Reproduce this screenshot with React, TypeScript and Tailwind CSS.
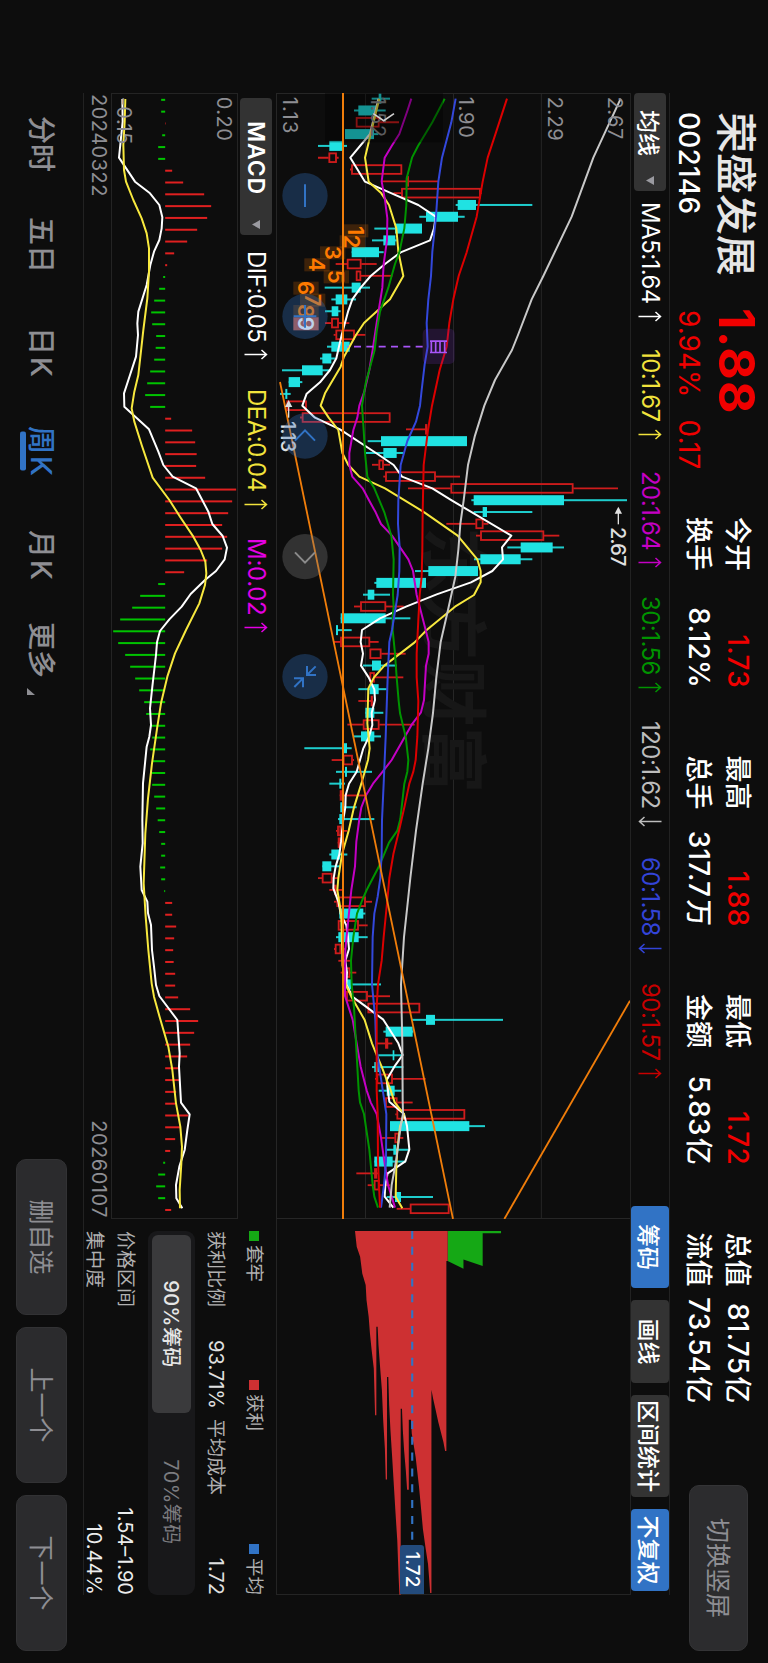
import React from 'react';
import clsx from 'clsx';

type Point = [number, number];
// [direction, body low, body high, wick low, wick high]
type Candle = ['u' | 'd', number, number, number, number];

const STEP = 35.43;

const stats = [
  { rows: [['今开', '1.73', '', true], ['换手', '8.12%', '', false]] },
  { rows: [['最高', '1.88', '', true], ['总手', '317.7', '万', false]] },
  { rows: [['最低', '1.72', '', true], ['金额', '5.83', '亿', false]] },
  { rows: [['总值', '81.75', '亿', false], ['流值', '73.54', '亿', false]] },
] as { rows: [string, string, string, boolean][] }[];

const averages = [
  { label: 'MA5:1.64', up: true, cls: 'w-[147px] text-white' },
  { label: '10:1.67', up: true, cls: 'w-[122px] text-[#f2e33c]' },
  { label: '20:1.64', up: true, cls: 'w-[125px] text-[#c400c4]' },
  { label: '30:1.56', up: true, cls: 'w-[125px] text-[#009400]' },
  { label: '120:1.62', up: false, cls: 'w-[136px] text-[#bdbdbd]' },
  { label: '60:1.58', up: false, cls: 'w-[126px] text-[#3344d8]' },
  { label: '90:1.57', up: true, cls: 'w-[110px] text-[#c80000]' },
];

const tools = [
  { label: '筹码', cls: 'w-[82px] bg-[#3173c5]' },
  { label: '画线', cls: 'w-[83px] bg-[#333333]' },
  { label: '区间统计', cls: 'w-[102px] bg-[#333333]' },
  { label: '不复权', cls: 'w-[82px] bg-[#3173c5]' },
];

const tabs = [
  { label: '分时', cls: 'w-[101px]' },
  { label: '五日', cls: 'w-[110px]' },
  { label: '日', k: true, cls: 'w-[99px]' },
  { label: '周', k: true, cls: 'w-[104px]', active: true },
  { label: '月', k: true, cls: 'w-[92px]' },
  { label: '更多', cls: 'w-[80px]', more: true },
];

const candles: Candle[] = [
  ['d', 326, 334, 305, 360], ['d', 265, 318, 252, 347], ['u', 258, 328, 258, 387], ['d', 225, 312, 225, 325],
  ['d', 178, 218, 144, 231], ['u', 176, 200, 144, 206], ['u', 244, 396, 240, 396], ['u', 413, 416, 333, 505],
  ['u', 394, 632, 370, 635], ['d', 563, 618, 557, 787], ['d', 468, 564, 448, 584], ['d', 375, 456, 313, 456],
  ['d', 340, 376, 306, 380], ['d', 245, 327, 245, 341], ['u', 231, 274, 197, 320], ['u', 258, 273, 258, 367],
  ['d', 245, 272, 164, 300], ['d', 197, 232, 184, 258], ['d', 185, 205, 165, 212], ['u', 184, 206, 165, 238],
  ['u', 197, 254, 191, 286], ['d', 184, 239, 171, 239], ['d', 157, 184, 150, 197], ['d', 96, 158, 36, 180],
  ['d', 56, 90, 56, 97], ['d', 46, 52, 30, 62], ['u', 50, 110, 50, 110], ['u', 96, 361, 90, 361],
  ['u', 469, 471, 408, 472], ['d', 333, 591, 293, 591], ['d', 340, 380, 287, 400], ['u', 326, 341, 306, 360],
  ['u', 346, 497, 340, 570], ['u', 542, 910, 414, 1044], ['d', 611, 882, 604, 1071], ['d', 638, 651, 611, 787],
  ['u', 617, 640, 529, 655], ['u', 631, 822, 618, 868], ['d', 752, 848, 712, 882], ['d', 631, 752, 612, 787],
  ['d', 475, 624, 435, 624], ['d', 319, 468, 313, 468], ['d', 293, 313, 279, 360], ['u', 271, 348, 252, 401],
  ['d', 212, 347, 212, 421], ['d', 198, 204, 198, 245], ['u', 211, 300, 192, 326], ['u', 299, 334, 299, 407],
  ['d', 306, 333, 279, 380], ['u', 299, 314, 299, 400], ['d', 299, 326, 265, 350], ['u', 306, 308, 265, 309],
  ['d', 286, 313, 286, 340], ['u', 279, 328, 232, 434], ['d', 273, 313, 252, 333], ['d', 219, 231, 103, 245],
  ['u', 219, 248, 185, 252], ['d', 225, 231, 198, 306], ['d', 208, 214, 178, 225], ['u', 210, 219, 209, 290],
  ['d', 212, 216, 212, 260], ['d', 208, 217, 204, 313], ['u', 202, 213, 198, 232], ['u', 204, 212, 203, 213],
  ['d', 184, 210, 178, 232], ['d', 157, 184, 157, 210], ['u', 156, 187, 144, 204], ['u', 193, 199, 178, 218],
  ['u', 200, 287, 192, 306], ['d', 208, 280, 208, 286], ['u', 204, 266, 204, 293], ['d', 205, 266, 198, 293],
  ['u', 195, 213, 192, 225], ['u', 215, 222, 205, 240], ['u', 222, 240, 212, 259], ['d', 230, 243, 225, 333],
  ['u', 229, 293, 229, 360], ['u', 293, 450, 290, 450], ['d', 468, 495, 425, 699], ['d', 347, 428, 340, 430],
  ['u', 346, 354, 320, 367], ['d', 368, 373, 325, 398], ['d', 313, 330, 306, 400], ['u', 320, 368, 315, 467],
  ['d', 350, 374, 326, 394], ['u', 346, 382, 346, 428], ['u', 380, 585, 376, 585], ['d', 360, 598, 360, 645],
  ['u', 374, 387, 333, 400], ['d', 370, 378, 350, 420], ['d', 313, 368, 313, 408], ['u', 313, 321, 259, 326],
  ['u', 312, 328, 293, 360], ['d', 375, 393, 350, 489], ['u', 420, 538, 380, 538],
];

const ma5: Point[] = [
  [41, 325], [147, 300], [218, 241], [290, 285], [325, 365], [360, 445], [395, 497], [430, 492], [466, 480],
  [502, 392], [537, 345], [573, 302], [608, 272], [643, 247], [680, 234], [750, 215], [820, 199], [855, 180],
  [892, 150], [926, 110], [962, 97], [998, 135], [1033, 210], [1104, 318], [1140, 371], [1175, 396], [1210, 487],
  [1246, 545], [1352, 724], [1387, 696], [1423, 699], [1458, 667], [1492, 603], [1528, 500], [1565, 408],
  [1600, 330], [1635, 276], [1671, 272], [1706, 279], [1742, 273], [1777, 296], [1813, 313], [1845, 315],
  [1884, 305], [1920, 307], [1955, 297], [1990, 280], [2060, 260], [2096, 237], [2131, 227], [2167, 226],
  [2202, 220], [2270, 213], [2308, 208], [2344, 197], [2379, 191], [2410, 190], [2450, 205], [2486, 212],
  [2521, 229], [2556, 234], [2592, 237], [2627, 226], [2662, 231], [2698, 229], [2735, 247], [2768, 292],
  [2804, 340], [2839, 362], [2875, 385], [2910, 398], [2945, 373], [2985, 350], [3050, 358], [3087, 402],
  [3123, 411], [3193, 418], [3229, 406], [3265, 353], [3300, 346], [3335, 344], [3368, 370],
];

const ma10: Point[] = [
  [41, 328], [147, 302], [218, 285], [290, 296], [325, 334], [360, 357], [430, 379], [500, 385], [573, 400],
  [643, 360], [714, 282], [750, 258], [815, 222], [845, 212], [925, 165], [962, 152], [998, 176], [1035, 205],
  [1104, 217], [1140, 235], [1175, 268], [1210, 345], [1282, 463], [1352, 563], [1423, 622], [1458, 632],
  [1492, 632], [1530, 612], [1565, 555], [1635, 470], [1673, 433], [1742, 343], [1777, 312], [1810, 295],
  [1915, 292], [1990, 299], [2025, 294], [2096, 274], [2167, 252], [2237, 236], [2308, 216], [2379, 205],
  [2415, 202], [2470, 211], [2503, 214], [2645, 218], [2700, 228], [2735, 244], [2805, 284], [2875, 306],
  [2910, 320], [2945, 335], [3016, 362], [3052, 374], [3087, 402], [3125, 390], [3195, 382], [3245, 379],
  [3335, 377], [3370, 397],
];

const ma20: Point[] = [
  [41, 424], [75, 413], [147, 388], [183, 365], [218, 344], [289, 335], [345, 345], [400, 352], [465, 351],
  [537, 341], [608, 337], [714, 320], [795, 308], [855, 298], [920, 283], [962, 268], [998, 262], [1035, 250],
  [1104, 238], [1140, 238], [1175, 247], [1210, 278], [1246, 297], [1282, 317], [1317, 333], [1352, 366],
  [1423, 415], [1458, 429], [1530, 440], [1635, 467], [1671, 476], [1706, 476], [1742, 468], [1845, 462],
  [1882, 453], [1919, 425], [2025, 365], [2060, 338], [2096, 309], [2131, 288], [2167, 274], [2202, 268],
  [2270, 259], [2344, 255], [2415, 244], [2503, 235], [2595, 226], [2733, 225], [2804, 248], [2875, 260],
  [2945, 272], [3016, 290], [3052, 302], [3087, 320], [3158, 333], [3229, 343], [3300, 354], [3368, 375],
];

const ma30: Point[] = [
  [41, 524], [112, 487], [183, 444], [218, 426], [280, 410], [360, 409], [430, 403], [502, 388], [537, 375],
  [608, 355], [680, 330], [740, 320], [795, 314], [895, 287], [962, 276], [1035, 281], [1104, 285], [1175, 292],
  [1210, 313], [1282, 343], [1352, 364], [1423, 371], [1530, 369], [1565, 371], [1595, 368], [1635, 368],
  [1706, 375], [1777, 380], [1848, 386], [1884, 390], [1955, 407], [2025, 415], [2060, 412], [2096, 403],
  [2202, 391], [2237, 382], [2273, 357], [2344, 327], [2415, 290], [2445, 277], [2486, 261], [2556, 250],
  [2627, 243], [2698, 245], [2768, 252], [2910, 260], [3016, 266], [3052, 270], [3087, 282], [3194, 298],
  [3300, 308], [3335, 313], [3368, 324],
];

const ma60: Point[] = [
  [41, 557], [112, 544], [218, 516], [290, 505], [395, 498], [500, 487], [573, 483], [643, 475], [714, 470],
  [785, 473], [838, 464], [915, 455], [962, 450], [1010, 438], [1068, 412], [1104, 402], [1140, 392],
  [1246, 385], [1317, 384], [1387, 389], [1458, 388], [1530, 383], [1635, 366], [1671, 358], [1777, 353],
  [1955, 347], [2096, 341], [2205, 336], [2305, 335], [2379, 331], [2435, 323], [2486, 313], [2556, 308],
  [2698, 306], [2804, 316], [2875, 318], [2910, 322], [2981, 333], [3087, 349], [3229, 348], [3300, 342],
  [3368, 333],
];

const ma90: Point[] = [
  [41, 711], [145, 677], [218, 653], [290, 638], [395, 620], [502, 590], [573, 566], [643, 550], [714, 538],
  [785, 530], [855, 509], [962, 486], [1035, 474], [1068, 470], [1140, 461], [1282, 458], [1395, 457],
  [1475, 455], [1530, 449], [1605, 445], [1706, 440], [1777, 440], [1848, 445], [1955, 442], [2025, 437],
  [2060, 430], [2096, 418], [2167, 403], [2237, 387], [2308, 370], [2379, 358], [2445, 352], [2556, 341],
  [2627, 335], [2698, 324], [2765, 320], [3016, 320], [3087, 323], [3229, 324], [3368, 330],
];

const ma120: Point[] = [
  [41, 1052], [218, 970], [395, 905], [573, 820], [643, 785], [750, 744], [795, 726], [885, 675], [962, 643],
  [1055, 614], [1140, 594], [1246, 581], [1317, 571], [1395, 565], [1475, 556], [1575, 534], [1671, 512],
  [1777, 499], [1884, 489], [1990, 475], [2096, 458], [2237, 438], [2379, 421], [2445, 414], [2556, 402],
  [2698, 393], [2875, 397], [3045, 398], [3087, 399], [3123, 392], [3229, 378], [3300, 365], [3368, 359],
];

const macdBars = [
  -4, -4, 0.5, -3, -7, -7, 7, 18, 39, 46, 42, 32, 22, 9, 2, -2, -6, -11, -14, -13, -9, -9.5, -11, -15, -18, -20,
  -15, 6, 27, 30, 31.5, 31, 40, 71, 67, 63, 57, 62, 57, 42, 19, -7, -25, -33, -45, -52, -47, -40, -35, -30, -26,
  -21, -19, -14, -13, -15, -13, -13.5, -13, -11, -9, -7.5, -6, -4, -4, -5, -4, -1, 7, 7, 11, 9, 8, 8.5, 10, 10, 13,
  25, 33, 29, 25, 22, 14, 14, 11, 10, 23, 15, 10, 5, -2, -7, -9, -7, 6,
];

const dif: Point[] = [
  [42, 127], [110, 128], [218, 117], [290, 165], [325, 210], [360, 238], [397, 247], [430, 245], [465, 238],
  [500, 222], [540, 211], [600, 200], [680, 175], [715, 172], [750, 174], [815, 168], [870, 150], [925, 132],
  [965, 133], [1033, 207], [1100, 235], [1140, 250], [1175, 278], [1210, 348], [1280, 385], [1317, 397],
  [1353, 428], [1388, 441], [1423, 434], [1458, 408], [1485, 375], [1527, 332], [1565, 305], [1603, 268],
  [1638, 240], [1672, 231], [1710, 228], [1805, 217], [1870, 210], [1920, 213], [1955, 208], [1985, 200],
  [2095, 189], [2205, 187], [2275, 188], [2345, 181], [2415, 185], [2450, 202], [2485, 204], [2520, 213],
  [2595, 216], [2645, 222], [2700, 228], [2733, 238], [2805, 292], [2905, 299], [2945, 297], [3053, 303],
  [3088, 329], [3135, 322], [3195, 314], [3245, 298], [3300, 288], [3340, 289], [3370, 307],
];

const dea: Point[] = [
  [42, 136], [110, 134], [180, 130], [255, 132], [290, 138], [345, 160], [400, 185], [445, 200], [490, 207],
  [560, 207], [640, 202], [735, 190], [870, 175], [920, 163], [970, 155], [1010, 163], [1080, 185], [1178, 218],
  [1245, 268], [1295, 300], [1355, 340], [1395, 362], [1430, 376], [1465, 379], [1500, 375], [1555, 358],
  [1635, 318], [1705, 285], [1775, 262], [1855, 243], [1925, 232], [2035, 216], [2140, 204], [2245, 196],
  [2395, 191], [2495, 197], [2595, 205], [2695, 215], [2735, 222], [2800, 240], [2885, 265], [2955, 277],
  [3055, 288], [3125, 301], [3185, 306], [3235, 304], [3315, 299], [3370, 300],
];

// sequence markers drawn under the candles: [digit, x, level]
const sequence: [number, number, number][] = [
  [1, 437, 257], [2, 470, 247], [3, 503, 188], [4, 539, 141], [5, 575, 199],
  [6, 609, 108], [7, 645, 128], [8, 679, 108], [9, 716, 108],
];

const chips: Point[] = [
  [243, 831], [290, 835], [320, 843], [370, 848], [405, 856], [450, 858], [500, 863], [550, 866], [600, 870],
  [655, 875], [795, 878], [795, 881], [530, 881], [530, 884], [585, 886], [655, 890], [720, 894], [810, 897],
  [895, 901], [987, 903], [987, 906], [680, 906], [680, 909], [765, 911], [840, 914], [920, 918], [1005, 922],
  [1090, 926], [1170, 930], [1275, 933], [1332, 935], [1332, 938], [775, 938], [775, 941], [840, 943], [900, 946],
  [960, 950], [1018, 953], [1018, 957], [808, 957], [808, 962], [850, 964], [880, 968], [920, 973], [965, 977],
  [1010, 981], [1065, 985], [1135, 990], [1190, 996], [1240, 1002], [1290, 1005], [1327, 1007], [1327, 1010],
  [718, 1010], [745, 1014], [780, 1020], [815, 1026], [845, 1032], [875, 1038], [902, 1042], [902, 1045],
  [333, 1045], [333, 1048], [243, 1048],
];

const trapped: Point[] = [
  [243, 1048], [333, 1048], [356, 1085], [328, 1085], [348, 1130], [250, 1130], [250, 1173], [243, 1173],
];

const toPoints = (pts: Point[], top: number) => pts.map(([x, v]) => `${x},${top - v}`).join(' ');

function Arrow({ up }: { up: boolean }) {
  return (
    <svg width="11" height="24" viewBox="0 0 11 24" fill="none" stroke="currentColor" strokeWidth="1.5" className={clsx('ml-[7px] shrink-0', !up && 'rotate-180')}>
      <path d="M5.5 23.5V1.5M1 6.5L5.5 1.5L10 6.5" />
    </svg>
  );
}

function Caret() {
  return (
    <svg width="9" height="8" viewBox="0 0 9 8" className="fill-[#9a9aa0]">
      <path d="M0 0H9L4.5 8Z" />
    </svg>
  );
}

function Header() {
  return (
    <div className="flex h-[98px]">
      <div className="w-[197px] shrink-0 pl-[19px]">
        <div className="flex h-[62px] items-center pt-[3px] text-[41px] font-medium text-[#e6e6e6]">荣盛发展</div>
        <div className="flex h-[34px] items-center text-[28px] font-medium tracking-[0.2px] text-white">002146</div>
      </div>
      <div className="w-[227px] shrink-0 pl-[18px] text-[#f00000]">
        <div className="flex h-[62px] items-center text-[50px] font-bold tracking-[1.2px]">1.88</div>
        <div className="flex h-[34px] items-center gap-[22px] pl-[2px] text-[28px]">
          <span>9.94%</span>
          <span>0.17</span>
        </div>
      </div>
      {stats.map((s, i) => (
        <div key={i} className="mr-[67.5px] w-[171px] shrink-0 pt-[10px]">
          {s.rows.map(([label, value, unit, red]) => (
            <div key={label} className="flex h-[39px] items-center justify-between font-medium text-white">
              <span className="pt-[4px] text-[27px]">{label}</span>
              <span className={clsx('flex items-center text-[28px] tracking-[0.2px]', red && 'text-[#f00000]')}>
                {value}
                {unit && <span className="pt-[4px] pl-[2px] text-[27px]">{unit}</span>}
              </span>
            </div>
          ))}
        </div>
      ))}
      <button className="mt-[20px] ml-[14px] h-[59px] w-[166px] shrink-0 rounded-[10px] border border-[#343436] bg-[#2c2c2e] pt-[2px] text-[25px] text-[#8e8e93]">
        切换竖屏
      </button>
    </div>
  );
}

function Toolbar() {
  return (
    <div className="flex h-[40px] w-[1502px] items-center border-y border-[#222222]">
      <button className="mr-[11px] flex h-[32px] w-[98px] shrink-0 items-center rounded-[4px] bg-[#333333] pl-[17px] text-[23px] font-medium text-white">
        <span className="mr-[20px] pt-[4px]">均线</span>
        <Caret />
      </button>
      {averages.map(a => (
        <div key={a.label} className={clsx('flex shrink-0 items-center text-[24px] tracking-[-0.55px]', a.cls)}>
          {a.label}
          <Arrow up={a.up} />
        </div>
      ))}
      <div className="mr-[4px] ml-auto flex gap-[12px]">
        {tools.map(t => (
          <button key={t.label} className={clsx('h-[38px] rounded-[4px] pt-[4px] text-[23px] font-medium text-white', t.cls)}>
            {t.label}
          </button>
        ))}
      </div>
    </div>
  );
}

function RoundButton({ x, muted, children }: { x: number; muted?: boolean; children: React.ReactNode }) {
  return (
    <g transform={`translate(${x} 975)`} fill="none" stroke={muted ? '#8b8b8b' : '#3173c5'} strokeWidth="6">
      <circle r="68" stroke="none" fill={muted ? '#777777' : '#3173c5'} fillOpacity={muted ? 0.35 : 0.32} />
      {children}
    </g>
  );
}

function PriceChart() {
  const y = (v: number) => 1080 - v;
  const line = (pts: Point[], color: string, w = 6) => (
    <polyline points={toPoints(pts, 1080)} fill="none" stroke={color} strokeWidth={w} strokeLinejoin="round" />
  );

  return (
    <svg width="1126" height="354" viewBox="24 0 3378 1062" className="shrink-0">
      {/* rejilla */}
      <g stroke="#262626" strokeWidth="3">
        {[19.5, 286.5, 550.5, 814].map(v => (
          <line key={v} x1="24" x2="3402" y1={y(v)} y2={y(v)} />
        ))}
        <line x1="25.5" x2="25.5" y1="0" y2="1062" />
        <line x1="3400.5" x2="3400.5" y1="0" y2="1062" />
      </g>
      <text x="1325" y={y(478)} fontSize="200" fontWeight="700" fill="#171717">东方财富</text>

      {/* velas */}
      {candles.map(([dir, lo, hi, wl, wh], i) => {
        const x = 41 + STEP * i;
        if (dir === 'd') {
          return (
            <g key={i} fill="#20e2e2">
              <rect x={x - 3} y={y(wh)} width="6" height={wh - wl} opacity="0.9" />
              <rect x={x - 15} y={y(hi)} width="30" height={Math.max(hi - lo, 5)} />
            </g>
          );
        }
        return (
          <g key={i} stroke="#cf1c1c" strokeWidth="5.5" fill="none">
            <line x1={x} x2={x} y1={y(wh)} y2={y(hi)} />
            <line x1={x} x2={x} y1={y(lo)} y2={y(wl)} />
            <rect x={x - 13} y={y(hi) + 2} width="26" height={Math.max(hi - lo - 4, 1)} />
          </g>
        );
      })}

      {line(ma5, '#ffffff')}
      {line(ma10, '#f7e83e')}
      {line(ma20, '#c400c4')}
      {line(ma30, '#009400')}
      {line(ma60, '#3348dc')}
      {line(ma90, '#dc0000')}
      {line(ma120, '#c8c8c8')}

      <g fontSize="60" fill="#8e8e93">
        <text x="35" y={y(1015)} letterSpacing="1.5">2.67</text>
        <text x="35" y={y(833)} letterSpacing="1.5">2.29</text>
        <text x="35" y={y(567)} letterSpacing="2.5">1.90</text>
        <text x="35" y={y(303)} letterSpacing="2.5">1.52</text>
        <text x="35" y={y(39)} letterSpacing="4">1.13</text>
      </g>

      <rect x="24" y={y(519)} width="148" height="354" fill="#000000" fillOpacity="0.35" />
      <path d={`M86 ${y(310)}L107 ${y(341)}L86 ${y(372)}`} fill="none" stroke="#d0d0d0" strokeWidth="5" />

      {sequence.map(([n, x, v]) => (
        <g key={n}>
          <rect x={x - 19} y={y(v + 38)} width="39" height="76" fill={n === 9 ? '#d8604c' : '#ff7a00'} fillOpacity={n === 9 ? 0.85 : 0.2} />
          <text x={x} y={y(v) + 24} fontSize="66" fontWeight="600" textAnchor="middle" fill={n === 9 ? '#ffffff' : '#ff7a00'}>{n}</text>
        </g>
      ))}

      {/* nota */}
      <rect x="731" y={y(554)} width="106" height="96" rx="15" fill="#7a30c0" fillOpacity="0.2" />
      <g stroke="#a855f7" strokeWidth="5">
        <line x1="785" x2="785" y1={y(458)} y2={y(232)} strokeDasharray="21 16" />
        <path d={`M768.5 ${y(531)}V${y(480)}M802.5 ${y(531)}V${y(480)}`} />
        <path d={`M768 ${y(484)}H803M768 ${y(497)}H803M768 ${y(510)}H803M768 ${y(524)}H803`} />
      </g>

      <g stroke="#f07d0a" strokeWidth="5.5">
        <line x1="24" x2="3402" y1={y(219)} y2={y(219)} strokeWidth="6" />
        <line x1="891" x2="3402" y1={y(30)} y2={y(549)} />
        <line x1="2747" x2="3402" y1={y(1080)} y2={y(703)} />
      </g>

      <g fill="#e0e0e0" fontSize="60" fontWeight="500">
        <path d={`M945 ${y(56)}L966 ${y(67)}V${y(45)}Z`} />
        <rect x="962" y={y(58)} width="36" height="4" />
        <text x="1008" y={y(34)} textLength="94">1.13</text>
        <path d={`M1265 ${y(1045)}L1286 ${y(1056)}V${y(1034)}Z`} />
        <rect x="1282" y={y(1047)} width="36" height="4" />
        <text x="1326" y={y(1023)} textLength="118">2.67</text>
      </g>

      <RoundButton x={332}>
        <path d="M-34 0H34" />
      </RoundButton>
      <RoundButton x={694}>
        <path d="M-34 0H34M0 -34V34" />
      </RoundButton>
      <RoundButton x={1053}>
        <path d="M14 -30L-17 0L14 30" />
      </RoundButton>
      <RoundButton x={1415} muted>
        <path d="M-13 -30L18 0L-13 30" />
      </RoundButton>
      <RoundButton x={1775}>
        <path d="M-5 -33V-6H-32M-5 -6L-31 -32M5 33V6H32M5 6L31 32" />
      </RoundButton>
    </svg>
  );
}

function ChipChart() {
  return (
    <div className="relative h-[354px] w-[376px] shrink-0 border-r border-b border-[#242424]">
      <svg width="376" height="354" viewBox="207 0 1126 829" preserveAspectRatio="none">
        <polygon points={toPoints(trapped, 1475)} fill="#15a815" />
        <polygon points={toPoints(chips, 1475)} fill="#cd3032" />
        <line x1="243" x2="1180" y1="510" y2="510" stroke="#3173c5" strokeWidth="5" strokeDasharray="24 23.4" />
      </svg>
      <span className="absolute top-[206px] right-0 flex h-[24px] w-[49px] items-center justify-center rounded-l-[3px] bg-[#234b7c] text-[19px] font-medium text-white">
        1.72
      </span>
    </div>
  );
}

function MacdPanel() {
  return (
    <div className="w-[1126px] shrink-0">
      <div className="flex h-[38px] items-center pt-[2px] pl-[5px] text-[24px]">
        <button className="mr-[16px] flex h-[32px] w-[137px] shrink-0 items-center justify-between rounded-[4px] bg-[#333333] pr-[6px] pl-[23px] text-[23px] font-semibold tracking-[0.8px] text-white">
          MACD
          <Caret />
        </button>
        <div className="flex w-[138px] items-center tracking-[-0.5px] text-white">DIF:0.05<Arrow up /></div>
        <div className="flex w-[149px] items-center tracking-[-0.5px] text-[#f2e33c]">DEA:0.04<Arrow up /></div>
        <div className="flex items-center tracking-[-0.3px] text-[#e400e4]">M:0.02<Arrow up /></div>
      </div>
      <svg width="1126" height="127" viewBox="24 0 3378 381" className="block">
        <rect x="25.5" y="1.5" width="3375" height="378" fill="none" stroke="#242424" strokeWidth="3" />
        {macdBars.map((v, i) => (
          <rect
            key={i}
            x={41.5 + STEP * i}
            y={v > 0 ? 218.5 - v * 3 : 218.5}
            width="6"
            height={Math.abs(v) * 3}
            fill={v > 0 ? '#e02020' : '#00c400'}
          />
        ))}
        <polyline points={toPoints(dif, 474)} fill="none" stroke="#ffffff" strokeWidth="6" strokeLinejoin="round" />
        <polyline points={toPoints(dea, 474)} fill="none" stroke="#f7e83e" strokeWidth="6" strokeLinejoin="round" />
        <g fontSize="60" fill="#8e8e93">
          <text x="35" y="62" letterSpacing="1.5">0.20</text>
          <text x="35" y="364" letterSpacing="1.5">-0.15</text>
        </g>
      </svg>
      <div className="flex h-[28px] justify-between border-b border-[#222222] pr-[1px] pl-[1px] text-[20px] leading-[24px] tracking-[0.5px] text-[#8e8e93]">
        <span>20240322</span>
        <span>20260107</span>
      </div>
    </div>
  );
}

function ChipPanel() {
  return (
    <div className="h-[193px] w-[376px] shrink-0 border-b border-[#222222] pt-[2px] pl-[12px] text-[19px] text-[#b0b0b0]">
      <div className="flex h-[39px] items-center justify-between text-[18.5px]">
        <span className="flex items-center gap-[4px]"><i className="size-[10px] bg-[#15a815]" />套牢</span>
        <span className="mr-[15px] flex items-center gap-[4px]"><i className="size-[10px] bg-[#cd3032]" />获利</span>
        <span className="flex items-center gap-[4px]"><i className="size-[10px] bg-[#3173c5]" />平均</span>
      </div>
      <div className="flex h-[38px] items-center">
        <span className="pt-[2px]">获利比例</span>
        <span className="ml-auto text-[20px] text-[#e0e0e0]">93.71%</span>
        <span className="ml-[10px] pt-[2px]">平均成本</span>
        <span className="w-[100px] text-right text-[20px] text-[#e0e0e0]">1.72</span>
      </div>
      <div className="mt-[2px] flex h-[47px] rounded-[9px] bg-[#18181a] p-[4px] text-[20px] tracking-[0.4px]">
        <button className="w-[178px] rounded-[6px] bg-[#3a3a3c] pt-[1px] font-medium text-[#e6e6e6]">90%筹码</button>
        <button className="flex-1 pt-[1px] text-[#7c7c80]">70%筹码</button>
      </div>
      <div className="mt-[7px] flex h-[31px] items-center justify-between">
        <span className="pt-[2px]">价格区间</span>
        <span className="text-[20px] text-[#ececec]">1.54–1.90</span>
      </div>
      <div className="flex h-[31px] items-center justify-between">
        <span className="pt-[2px]">集中度</span>
        <span className="text-[20px] text-[#ececec]">10.44%</span>
      </div>
    </div>
  );
}

function Footer() {
  return (
    <div className="flex h-[83px] items-center pl-[23px]">
      {tabs.map(t => (
        <div key={t.label} className={clsx('flex shrink-0', t.cls)}>
          <span className={clsx('relative flex items-center text-[28px] leading-none font-medium', t.active ? 'text-[#3173c5]' : 'text-[#8e8e93]')}>
            <span className="pt-[1px]">{t.label}</span>
            {t.k && <span className="pl-[2px] text-[29px] leading-none">K</span>}
            {t.active && <i className="absolute -bottom-[7px] left-1/2 h-[6px] w-[39px] -translate-x-1/2 rounded-[2px] bg-[#3173c5]" />}
            {t.more && (
              <svg width="7" height="8" viewBox="0 0 7 8" className="absolute -right-[17px] bottom-0 fill-[#8e8e93]">
                <path d="M7 0V8H0Z" />
              </svg>
            )}
          </span>
        </div>
      ))}
      <div className="mr-[12px] ml-auto flex gap-[12px]">
        {['删自选', '上一个', '下一个'].map(label => (
          <button key={label} className="h-[51px] w-[156px] rounded-[10px] border border-[#323234] bg-[#2b2b2d] pt-[2px] text-[25px] text-[#8e8e93]">
            {label}
          </button>
        ))}
      </div>
    </div>
  );
}

export default function App() {
  return (
    <div className="h-[1663px] w-[768px] overflow-hidden bg-[#0d0d0d]">
      {/* pantalla apaisada */}
      <div className="h-[768px] w-[1663px] origin-top-left translate-x-[768px] rotate-90 bg-[#0d0d0d] pl-[93px] font-['Inter','Noto_Sans_CJK_SC',sans-serif] whitespace-nowrap">
        <Header />
        <Toolbar />
        <div className="flex h-[354px]">
          <PriceChart />
          <ChipChart />
        </div>
        <div className="flex h-[193px]">
          <MacdPanel />
          <ChipPanel />
        </div>
        <Footer />
      </div>
    </div>
  );
}
